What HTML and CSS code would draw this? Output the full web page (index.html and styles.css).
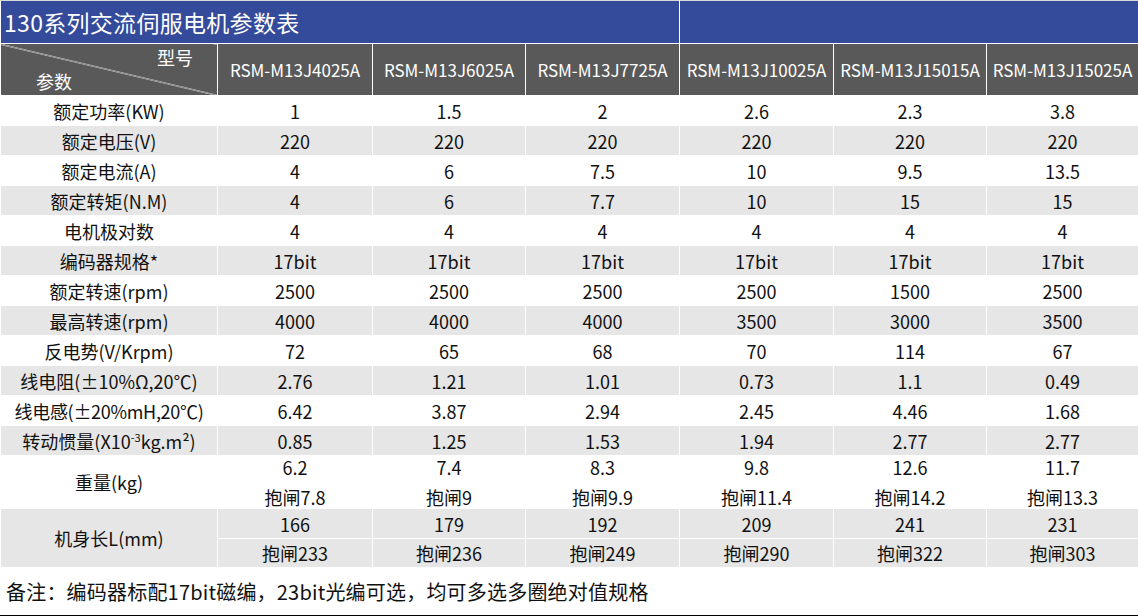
FILE: index.html
```html
<!DOCTYPE html>
<html lang="zh-CN">
<head>
<meta charset="utf-8">
<title>130系列交流伺服电机参数表</title>
<link rel="stylesheet" href="styles.css">
</head>
<body>
<table class="spec">
  <colgroup>
    <col class="c0"><col class="c1"><col class="c2"><col class="c3"><col class="c4"><col class="c5"><col class="c6">
  </colgroup>
  <tr class="title-row">
    <td colspan="4" class="title">130系列交流伺服电机参数表</td>
    <td colspan="3" class="title"></td>
  </tr>
  <tr class="head-row">
    <td class="corner">
      <div class="corner-in">
        <span class="corner-top">型号</span>
        <span class="corner-bot">参数</span>
      </div>
    </td>
    <td>RSM-M13J4025A</td>
    <td>RSM-M13J6025A</td>
    <td>RSM-M13J7725A</td>
    <td>RSM-M13J10025A</td>
    <td>RSM-M13J15015A</td>
    <td>RSM-M13J15025A</td>
  </tr>
  <tr class="row"><td>额定功率(KW)</td><td>1</td><td>1.5</td><td>2</td><td>2.6</td><td>2.3</td><td>3.8</td></tr>
  <tr class="row alt"><td>额定电压(V)</td><td>220</td><td>220</td><td>220</td><td>220</td><td>220</td><td>220</td></tr>
  <tr class="row"><td>额定电流(A)</td><td>4</td><td>6</td><td>7.5</td><td>10</td><td>9.5</td><td>13.5</td></tr>
  <tr class="row alt"><td>额定转矩(N.M)</td><td>4</td><td>6</td><td>7.7</td><td>10</td><td>15</td><td>15</td></tr>
  <tr class="row"><td>电机极对数</td><td>4</td><td>4</td><td>4</td><td>4</td><td>4</td><td>4</td></tr>
  <tr class="row alt"><td>编码器规格*</td><td>17bit</td><td>17bit</td><td>17bit</td><td>17bit</td><td>17bit</td><td>17bit</td></tr>
  <tr class="row"><td>额定转速(rpm)</td><td>2500</td><td>2500</td><td>2500</td><td>2500</td><td>1500</td><td>2500</td></tr>
  <tr class="row alt"><td>最高转速(rpm)</td><td>4000</td><td>4000</td><td>4000</td><td>3500</td><td>3000</td><td>3500</td></tr>
  <tr class="row"><td>反电势(V/Krpm)</td><td>72</td><td>65</td><td>68</td><td>70</td><td>114</td><td>67</td></tr>
  <tr class="row alt"><td>线电阻(±10%Ω,20℃)</td><td>2.76</td><td>1.21</td><td>1.01</td><td>0.73</td><td>1.1</td><td>0.49</td></tr>
  <tr class="row"><td class="tight">线电感(±20%mH,20℃)</td><td>6.42</td><td>3.87</td><td>2.94</td><td>2.45</td><td>4.46</td><td>1.68</td></tr>
  <tr class="row alt"><td>转动惯量(X10<sup>-3</sup>kg.m²)</td><td>0.85</td><td>1.25</td><td>1.53</td><td>1.94</td><td>2.77</td><td>2.77</td></tr>
  <tr class="row-weight"><td>重量(kg)</td><td><div class="two">6.2<br>抱闸7.8</div></td><td><div class="two">7.4<br>抱闸9</div></td><td><div class="two">8.3<br>抱闸9.9</div></td><td><div class="two">9.8<br>抱闸11.4</div></td><td><div class="two">12.6<br>抱闸14.2</div></td><td><div class="two">11.7<br>抱闸13.3</div></td></tr>
  <tr class="row alt"><td rowspan="2">机身长L(mm)</td><td>166</td><td>179</td><td>192</td><td>209</td><td>241</td><td>231</td></tr>
  <tr class="row alt sub"><td>抱闸233</td><td>抱闸236</td><td>抱闸249</td><td>抱闸290</td><td>抱闸322</td><td>抱闸303</td></tr>
  <tr class="note-row"><td colspan="7" class="note">备注：编码器标配17bit磁编，23bit光编可选，均可多选多圈绝对值规格</td></tr>
</table>
</body>
</html>
```

FILE: styles.css
```css
html, body {
  margin: 0;
  padding: 0;
  background: #ffffff;
}

body {
  font-family: "Noto Sans CJK SC", "Noto Sans", sans-serif;
  color: #111;
}

.spec {
  width: 1138px;
  border-collapse: collapse;
  table-layout: fixed;
  font-size: 18px;
}

.c0 { width: 217px; }
.c1 { width: 155px; }
.c2 { width: 153px; }
.c3 { width: 154px; }
.c4 { width: 154px; }
.c5 { width: 153px; }
.c6 { width: 152px; }

.spec td {
  border: 1px solid #ffffff;
  padding: 0;
  text-align: center;
  vertical-align: middle;
  line-height: 28px;
  white-space: nowrap;
  overflow: hidden;
}

.title-row { height: 43px; }
.title-row td {
  background: #344a9a;
  border-top: 1px solid #d9d9d9;
  line-height: 40px;
}
.title {
  color: #ffffff;
  font-size: 23px;
  text-align: left !important;
  padding-left: 3px !important;
  letter-spacing: 0.3px;
}

.head-row { height: 52px; }
.head-row td {
  background: #595959;
  color: #ffffff;
  font-size: 17px;
}

.corner {
  background: linear-gradient(to top right, #595959 calc(50% - 0.7px), #ffffff, #595959 calc(50% + 0.7px)) !important;
}
.corner-in {
  display: flex;
  flex-direction: column;
  height: 50px;
  font-size: 18px;
}
.corner-top {
  align-self: flex-end;
  margin-right: 24px;
  line-height: 24px;
}
.corner-bot {
  align-self: flex-start;
  margin-left: 35px;
  line-height: 24px;
}

.row { height: 30px; }
.row.sub { height: 29px; }
.alt td { background: #e6e6e6; }

.tight { letter-spacing: -0.3px; }

sup {
  font-size: 11px;
  line-height: 0;
  vertical-align: 7px;
}

.row-weight { height: 53px; }
.row-weight td { overflow: visible; }
.two {
  height: 51px;
  display: flex;
  flex-direction: column;
  justify-content: center;
  line-height: 30px;
}

.note-row { height: 48px; }
.note {
  text-align: left !important;
  padding-left: 5px !important;
  font-size: 20px;
  letter-spacing: 0.2px;
  border-bottom: 1px solid #000000 !important;
}
```
